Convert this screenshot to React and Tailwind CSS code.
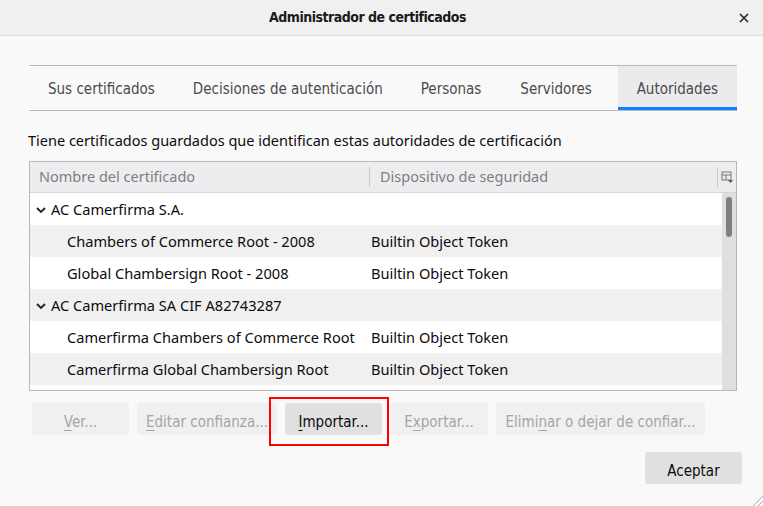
const tabs = ['Sus certificados', 'Decisiones de autenticación', 'Personas', 'Servidores', 'Autoridades'];

const rows = [
  { group: true, name: 'AC Camerfirma S.A.' },
  { name: 'Chambers of Commerce Root - 2008', device: 'Builtin Object Token' },
  { name: 'Global Chambersign Root - 2008', device: 'Builtin Object Token' },
  { group: true, name: 'AC Camerfirma SA CIF A82743287' },
  { name: 'Camerfirma Chambers of Commerce Root', device: 'Builtin Object Token' },
  { name: 'Camerfirma Global Chambersign Root', device: 'Builtin Object Token' },
  { name: 'Global Chambersign Root', device: 'Builtin Object Token' },
];

const narrow = { fontFamily: '"Liberation Sans Narrow", "DejaVu Sans Condensed", sans-serif' };
const body = { fontFamily: '"Noto Sans", "Open Sans", sans-serif' };

function Btn({ w, active, children }) {
  return (
    <button
      className={`${w} h-8 shrink-0 rounded-[3px] pt-[6px] text-[15px] whitespace-nowrap ${active ? 'bg-[#e0e0e1] text-[#0c0c0d]' : 'bg-[#f0f0f0] text-[#a5a5a5]'}`}
      style={narrow}
    >
      {children}
    </button>
  );
}

const U = ({ children }) => <span className="underline underline-offset-[3px]">{children}</span>;

export default function App() {
  return (
    <div className="w-[763px] h-[506px] bg-[#f9f9f9] flex flex-col overflow-hidden relative">
      {/* Title bar */}
      <div className="h-[36px] bg-[#f0f0f0] border-b border-[#dcdcdc] flex items-center justify-center pr-[28px] relative shrink-0">
        <span className="text-[14px] font-bold text-[#1a1a1a] tracking-[-0.5px]" style={narrow}>Administrador de certificados</span>
        <svg width="10" height="10" viewBox="0 0 10 10" className="absolute right-[14px] top-[13px]">
          <path d="M1 1 L9 9 M9 1 L1 9" stroke="#2a2a2a" strokeWidth="1.7" />
        </svg>
      </div>

      {/* Tabs */}
      <div className="mt-[29px] mx-[29px] w-[708px] h-[46px] border-y border-[#b8b8b8] flex items-stretch" style={narrow}>
        {tabs.map((t, i) => (
          <div
            key={t}
            className={`px-[19px] pt-[2px] flex items-center text-[15px] text-[#4a4a4f] relative ${i === 4 ? 'bg-[#ebebeb] ml-auto' : ''} ${i === 3 ? 'px-[20px]' : ''}`}
          >
            {t}
            {i === 4 && <div className="absolute left-0 right-0 bottom-0 h-[3px] bg-[#0a84ff]" />}
          </div>
        ))}
      </div>

      {/* Description */}
      <div className="mt-[19px] ml-[28px] text-[14.5px] text-[#0c0c0d]" style={body}>
        Tiene certificados guardados que identifican estas autoridades de certificación
      </div>

      {/* Tree */}
      <div className="mt-[9px] ml-[29px] w-[708px] h-[230px] border border-[#b8b8b8] bg-white flex flex-col overflow-hidden" style={body}>
        <div className="h-[31px] bg-[#ededf0] border-b border-[#d7d7db] flex items-center text-[14.5px] text-[#7e7e82] shrink-0">
          <div className="w-[339px] pl-[9px]">Nombre del certificado</div>
          <div className="w-px h-[20px] bg-[#c8c8cc]" />
          <div className="flex-1 pl-[10px]">Dispositivo de seguridad</div>
          <div className="w-px h-[20px] bg-[#c8c8cc]" />
          <svg width="14" height="14" viewBox="0 0 14 14" className="mx-[2px]">
            <rect x="2" y="2" width="9" height="8" fill="none" stroke="#777" />
            <line x1="2" y1="5" x2="11" y2="5" stroke="#777" />
            <line x1="6" y1="5" x2="6" y2="10" stroke="#777" />
            <path d="M8 10 L13 10 L10.5 13 Z" fill="#555" />
          </svg>
        </div>
        <div className="flex flex-1 min-h-0">
          <div className="flex-1 flex flex-col">
            {rows.map((r, i) => (
              <div key={i} className={`h-[32px] pt-[2px] shrink-0 flex items-center text-[14.6px] text-[#0c0c0d] ${i % 2 ? 'bg-[#f0f0f0]' : 'bg-white'}`}>
                {r.group ? (
                  <div className="flex items-center pl-[5px]">
                    <svg width="12" height="12" viewBox="0 0 12 12" className="mr-[4px]">
                      <path d="M2 4 L6 8 L10 4" fill="none" stroke="#222" strokeWidth="1.8" />
                    </svg>
                    {r.name}
                  </div>
                ) : (
                  <>
                    <div className="w-[341px] pl-[37px] whitespace-nowrap">{r.name}</div>
                    <div>{r.device}</div>
                  </>
                )}
              </div>
            ))}
          </div>
          <div className="w-[14px] bg-[#dfdfdf] flex justify-center pt-[4px] shrink-0">
            <div className="w-[6px] h-[40px] rounded-full bg-[#7f7f7f]" />
          </div>
        </div>
      </div>

      {/* Buttons */}
      <div className="mt-[12px] ml-[32px] flex gap-[8px] items-center">
        <Btn w="w-[97px]"><U>V</U>er...</Btn>
        <Btn w="w-[140px]"><U>E</U>ditar confianza...</Btn>
        <Btn w="w-[97px]" active><U>I</U>mportar...</Btn>
        <Btn w="w-[98px]">E<U>x</U>portar...</Btn>
        <Btn w="w-[209px]">Elimi<U>n</U>ar o dejar de confiar...</Btn>
      </div>

      {/* Highlight */}
      <div className="absolute left-[269px] top-[397px] w-[120px] h-[49px] border-2 border-[#ff0000]" />

      <div className="mt-[17px] mr-[21px] flex justify-end">
        <button className="w-[97px] h-8 pt-[6px] rounded-[3px] bg-[#e0e0e1] text-[15px] text-[#0c0c0d]" style={narrow}>Aceptar</button>
      </div>

      {/* Resize grip */}
      <svg width="12" height="12" viewBox="0 0 12 12" className="absolute right-0 bottom-0">
        <path d="M12 2 L2 12 M12 7 L7 12" stroke="#b0b0b0" strokeWidth="1" />
      </svg>
    </div>
  );
}
